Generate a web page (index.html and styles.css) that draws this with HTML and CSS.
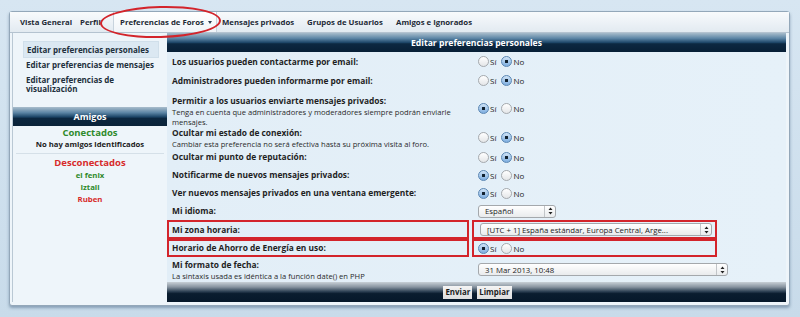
FILE: index.html
```html
<!DOCTYPE html>
<html lang="es">
<head>
<meta charset="utf-8">
<title>Editar preferencias personales</title>
<link rel="stylesheet" href="styles.css">
</head>
<body>
<div class="window">
  <nav class="tabs">
    <a class="tab t-general">Vista General</a>
    <a class="tab t-perfil">Perfil</a>
    <a class="tab active t-foros">Preferencias de Foros <span class="caret"></span></a>
    <a class="tab t-mp">Mensajes privados</a>
    <a class="tab t-grupos">Grupos de Usuarios</a>
    <a class="tab">Amigos e Ignorados</a>
  </nav>
  <div class="ring"></div>
  <div class="layout">
    <aside class="side">
      <ul class="menu">
        <li class="current">Editar preferencias personales</li>
        <li>Editar preferencias de mensajes</li>
        <li>Editar preferencias de visualización</li>
      </ul>
      <section class="friends">
        <div class="bar">Amigos</div>
        <div class="online">Conectados</div>
        <div class="none">No hay amigos identificados</div>
        <div class="rule"></div>
        <div class="offline">Desconectados</div>
        <div class="name green">el fenix</div>
        <div class="name green">Iztali</div>
        <div class="name red">Ruben</div>
      </section>
    </aside>
    <main class="main">
      <div class="head">Editar preferencias personales</div>
      <div class="grid">
        <div class="lbl r19"><b>Los usuarios pueden contactarme por email:</b></div>
        <div class="val"><div class="box"><span class="radio"></span>Sí <span class="radio on"></span>No</div></div>

        <div class="lbl r19"><b>Administradores pueden informarme por email:</b></div>
        <div class="val"><div class="box"><span class="radio"></span>Sí <span class="radio on"></span>No</div></div>

        <div class="lbl sub s3"><b>Permitir a los usuarios enviarte mensajes privados:</b><small>Tenga en cuenta que administradores y moderadores siempre podrán enviarle mensajes.</small></div>
        <div class="val"><div class="box"><span class="radio on"></span>Sí <span class="radio"></span>No</div></div>

        <div class="lbl sub s4"><b>Ocultar mi estado de conexión:</b><small>Cambiar esta preferencia no será efectiva hasta su próxima visita al foro.</small></div>
        <div class="val"><div class="box"><span class="radio"></span>Sí <span class="radio on"></span>No</div></div>

        <div class="lbl"><b>Ocultar mi punto de reputación:</b></div>
        <div class="val"><div class="box"><span class="radio"></span>Sí <span class="radio on"></span>No</div></div>

        <div class="lbl"><b>Notificarme de nuevos mensajes privados:</b></div>
        <div class="val"><div class="box"><span class="radio on"></span>Sí <span class="radio"></span>No</div></div>

        <div class="lbl"><b>Ver nuevos mensajes privados en una ventana emergente:</b></div>
        <div class="val"><div class="box"><span class="radio on"></span>Sí <span class="radio"></span>No</div></div>

        <div class="lbl"><b>Mi idioma:</b></div>
        <div class="val"><div class="box"><span class="select w-lang"><span class="stext">Español</span><span class="arrows"><svg width="5" height="8" viewBox="0 0 5 8"><path d="M2.5 0.5L4.5 3H0.5Z M2.5 7.5L4.5 5H0.5Z" fill="#222"/></svg></span></span></div></div>

        <div class="lbl mark r19"><b>Mi zona horaria:</b></div>
        <div class="val"><div class="box marked"><span class="select w-zone"><span class="stext">[UTC + 1] España estándar, Europa Central, Arge...</span><span class="arrows"><svg width="5" height="8" viewBox="0 0 5 8"><path d="M2.5 0.5L4.5 3H0.5Z M2.5 7.5L4.5 5H0.5Z" fill="#222"/></svg></span></span></div></div>

        <div class="lbl mark"><b>Horario de Ahorro de Energía en uso:</b></div>
        <div class="val"><div class="box marked"><span class="radio on"></span>Sí <span class="radio"></span>No</div></div>

        <div class="lbl sub s11"><b>Mi formato de fecha:</b><small>La sintaxis usada es idéntica a la función date() en PHP</small></div>
        <div class="val"><div class="box"><span class="select w-date"><span class="stext">31 Mar 2013, 10:48</span><span class="arrows"><svg width="5" height="8" viewBox="0 0 5 8"><path d="M2.5 0.5L4.5 3H0.5Z M2.5 7.5L4.5 5H0.5Z" fill="#222"/></svg></span></span></div></div>
      </div>
      <div class="foot">
        <button class="btn">Enviar</button>
        <button class="btn">Limpiar</button>
      </div>
    </main>
  </div>
</div>
</body>
</html>
```

FILE: styles.css
```css
* { box-sizing: border-box; margin: 0; padding: 0; }
html, body { height: 100%; }
body {
  background: linear-gradient(#d7e6f2, #c8dbea);
  font-family: "Open Sans", "DejaVu Sans", sans-serif;
  color: #1d1d1d;
  overflow: hidden;
}
.window {
  position: relative;
  margin: 11px 10px 0 9px;
  border: 1px solid #93a7b9;
  border-radius: 3px;
  background: #eef5fa;
  box-shadow: 0 2px 3px rgba(70, 100, 130, 0.5);
}
.tabs {
  display: flex;
  height: 21px;
  padding-left: 4px;
  background: linear-gradient(#f8fafc, #e2eaf1);
  border-bottom: 1px solid #b4c3d0;
}
.tab {
  display: flex;
  align-items: center;
  flex: none;
  padding: 0 0 0 6px;
  font-size: 7.8px;
  font-weight: 700;
  color: #1e2a36;
  white-space: nowrap;
}
.t-general { width: 60px; }
.t-perfil { width: 39px; }
.t-foros { width: 104px; }
.t-mp { width: 85px; padding-left: 5px; }
.t-grupos { width: 88px; padding-left: 5px; }
.tab.active {
  justify-content: space-between;
  padding: 0 5px 0 6px;
  background: linear-gradient(#ffffff, #f0f4f8);
  border-left: 1px solid #c8d3dd;
  border-right: 1px solid #c8d3dd;
}
.caret {
  display: inline-block;
  margin-left: 4px;
  border-left: 2.5px solid transparent;
  border-right: 2.5px solid transparent;
  border-top: 3px solid #2b3d50;
}
.ring {
  position: absolute;
  left: 90px;
  top: -6px;
  width: 121px;
  height: 32px;
  border: 2.5px solid #d3242b;
  border-radius: 50%;
  transform: rotate(-1.5deg);
  pointer-events: none;
}
.layout {
  display: flex;
  padding: 0 3px 3px 2px;
}
.side {
  width: 155px;
  flex: none;
  border-left: 1px solid #b9c8d4;
  padding-top: 8px;
}
.menu { list-style: none; padding: 0 4px 0 10px; }
.menu li {
  font-size: 8px;
  font-weight: 700;
  color: #22303c;
  line-height: 9.5px;
  padding: 2.5px 3px;
}
.menu li.current {
  background: #dbe8f2;
  border: 1px solid #d0dfea;
  margin-right: 4px;
}
.friends { margin-top: 11px; text-align: center; }
.friends .bar {
  height: 19px;
  line-height: 19px;
  color: #fff;
  font-size: 9px;
  font-weight: 700;
  background: linear-gradient(#a9bdcc 0%, #5b84a4 30%, #1c4567 52%, #0b263f 60%, #0a2339 100%);
}
.online { color: #2f8a2c; font-size: 9.5px; font-weight: 700; margin-top: 1px; line-height: 12px; }
.offline { color: #d72b2b; font-size: 9.5px; font-weight: 700; line-height: 12px; }
.none { font-size: 7.7px; font-weight: 700; line-height: 10px; color: #1c1c1c; }
.rule { height: 1px; background: #d5e0e8; margin: 4px 3px 3px 3px; }
.name { font-size: 7.8px; font-weight: 700; line-height: 12px; }
.green { color: #2f8a2c; }
.red { color: #d72b2b; }

.main { flex: 1; display: flex; flex-direction: column; background: #e3eff8; }
.head {
  height: 19px;
  line-height: 20px;
  text-align: center;
  color: #fff;
  font-size: 8.6px;
  font-weight: 700;
  background: linear-gradient(#a7bccb 0%, #5d86a6 28%, #1e4769 50%, #0c2841 57%, #071f36 100%);
}
.grid {
  display: grid;
  grid-template-columns: 302px 1fr;
  column-gap: 3px;
  background: linear-gradient(90deg, #e2eef7, #e6f1f9);
}
.lbl {
  display: flex;
  flex-direction: column;
  justify-content: center;
  padding: 0 5px;
  height: 18px;
}
.lbl.r19 { height: 19px; }
.lbl b { font-size: 8.4px; font-weight: 700; line-height: 12px; color: #1f1f1f; white-space: nowrap; }
.lbl small { font-size: 7.6px; line-height: 10px; color: #2a2a2a; white-space: nowrap; }
.lbl.sub { justify-content: flex-start; }
.lbl.s3 { height: 36px; padding-top: 5px; }
.lbl.s3 small { white-space: normal; padding-right: 10px; }
.lbl.s4 { height: 22px; padding-top: 1px; }
.lbl.s11 { height: 25px; padding-top: 2px; }
.lbl.mark { box-shadow: inset 0 0 0 2px #d3242b; }
.val { display: flex; align-items: center; }
.box {
  display: flex;
  align-items: center;
  height: 100%;
  padding-left: 6px;
  font-size: 8px;
  color: #222;
}
.box.marked {
  width: 245px;
  padding-left: 4px;
  border: 2px solid #d3242b;
}
.radio {
  width: 11px;
  height: 11px;
  border-radius: 50%;
  border: 1px solid #a5a9ad;
  background: linear-gradient(#ffffff, #e4e6e8);
  margin-right: 1px;
  flex: none;
}
.box .radio:nth-of-type(2) { margin-left: 5px; }
.radio.on {
  border-color: #5a86b3;
  background: radial-gradient(circle, #10202e 0 1.4px, transparent 1.9px), linear-gradient(#cfe3f6, #7eaee0);
}
.select {
  display: flex;
  align-items: center;
  height: 13px;
  border: 1px solid #a4a8ac;
  border-radius: 3px;
  background: linear-gradient(#ffffff, #e9ebed);
  font-size: 7.8px;
  color: #1d1d1d;
}
.stext { flex: 1; padding-left: 6px; white-space: nowrap; overflow: hidden; }
.arrows {
  width: 11px;
  height: 100%;
  display: flex;
  align-items: center;
  justify-content: center;
  border-left: 1px solid #c2c5c8;
}
.w-lang { width: 78px; }
.w-zone { width: 232px; margin-left: 2px; }
.w-date { width: 250px; }

.foot {
  height: 20px;
  display: flex;
  justify-content: center;
  align-items: center;
  gap: 5px;
  padding-left: 2px;
  background: linear-gradient(#c8d0d6 0%, #8894a0 25%, #2b3f52 48%, #0a1d2f 58%, #06182a 100%);
}
.btn {
  font-family: inherit;
  font-size: 7.9px;
  font-weight: 700;
  color: #1c1c1c;
  background: linear-gradient(#f4f4f4, #dedede);
  border: none;
  padding: 1.5px 2px;
  line-height: 10px;
}
```
